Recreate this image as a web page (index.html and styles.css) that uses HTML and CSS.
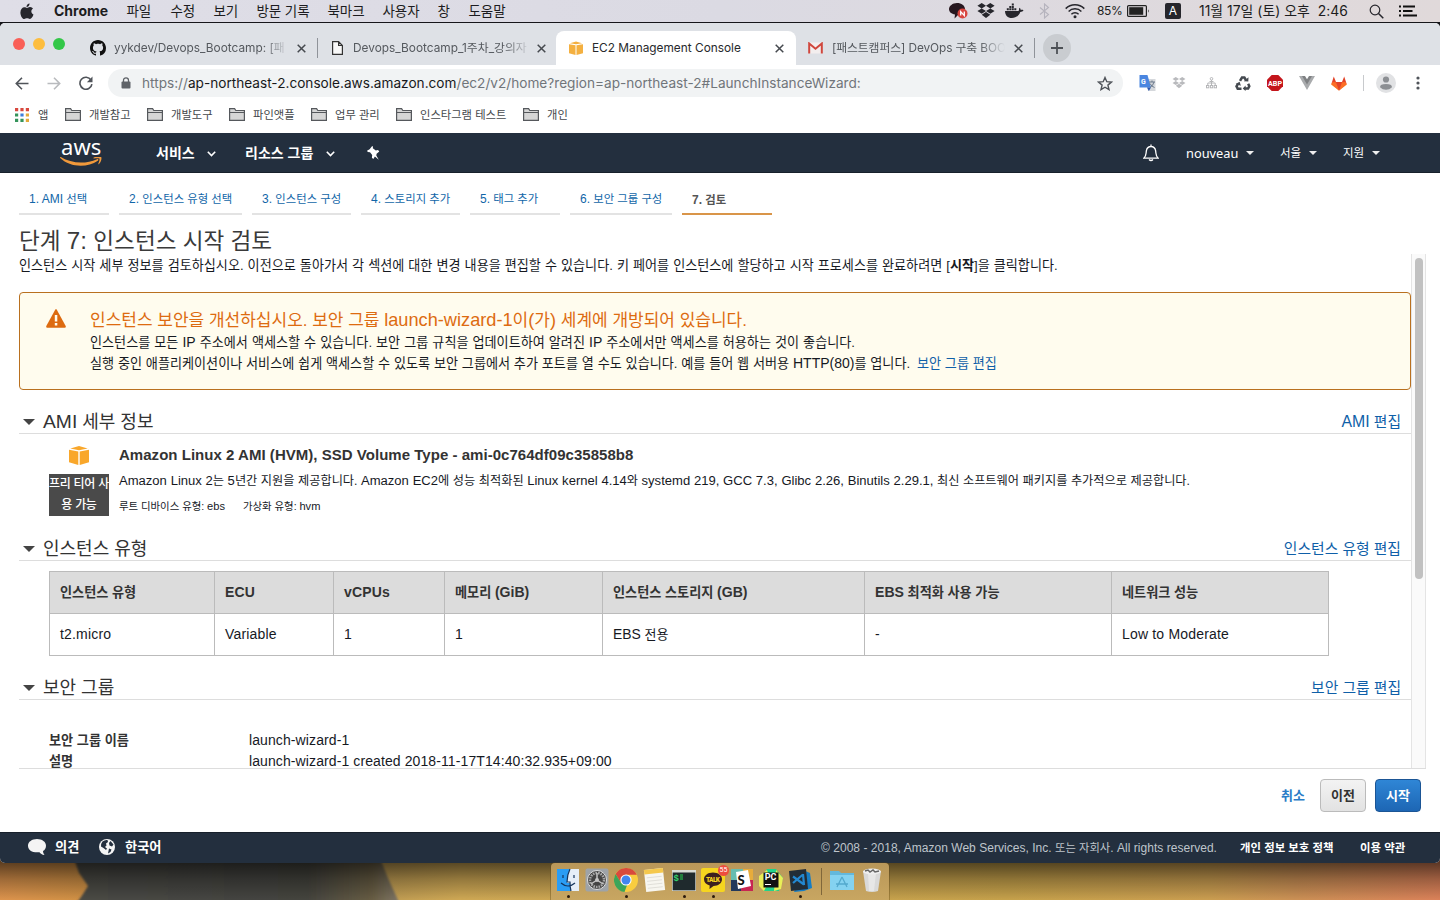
FILE: index.html
```html
<!DOCTYPE html>
<html lang="ko">
<head>
<meta charset="utf-8">
<title>EC2 Management Console</title>
<link rel="stylesheet" href="styles.css">
</head>
<body>
<div class="desktop">
  <header class="menubar">
    <svg class="apple" width="14" height="17" viewBox="0 0 14 17"><path fill="#26262c" d="M9.6 0.6c.1 1.9-1.500 3.500-3.100 3.400C6.300 2.300 8 .700 9.600.6zM7 4.900c.7 0 1.700-.9 3.100-.8 1.300.1 2.300.6 2.900 1.500-2.500 1.600-2 4.900.5 5.900-.8 2.300-2.100 4.500-3.600 4.500-1.100 0-1.500-.7-2.900-.7-1.300 0-1.700.7-2.700.7C2.200 16 .4 12.500.4 9.400c0-3.200 2-5.200 4-5.200 1.200 0 1.900.7 2.600.7z"/></svg>
    <nav class="menus">
      <b>Chrome</b><span>파일</span><span>수정</span><span>보기</span><span>방문 기록</span><span>북마크</span><span>사용자</span><span>창</span><span>도움말</span>
    </nav>
    <div class="status">
      <svg width="20" height="18" viewBox="0 0 20 18"><path fill="#26171f" d="M8 1c4.400 0 8 2.600 8 6s-3.600 6-7 6l-3.500 3.500.5-4C2.500 12 0 10 0 7s3.600-6 8-6z"/><circle cx="13.500" cy="11.500" r="5" fill="#d8453f"/><path d="M11.700 13.600v-4l3.600 4v-4" fill="none" stroke="#fff" stroke-width="1.300"/></svg>
      <svg width="18" height="16" viewBox="0 0 18 16"><path fill="#26262c" d="M4.700 0L9 2.700 4.700 5.400.4 2.700zM13.300 0l4.300 2.700-4.300 2.700L9 2.700zM.4 8.100l4.300-2.700L9 8.100l-4.300 2.700zM17.600 8.100l-4.300-2.700L9 8.100l4.300 2.700zM4.700 11.800L9 9.100l4.300 2.700L9 14.900z"/></svg>
      <svg width="19" height="16" viewBox="0 0 19 16"><path fill="#26262c" d="M0 8h13.500c.8-1 .4-2.300.9-3.300 1 .6 1.300 1.400 1.300 2.200 1-.3 2-.2 2.800.3-.5 1.200-1.700 1.700-3.200 1.700C13.900 12.800 10.800 15 6.800 15 2.700 15 .2 12.800 0 8zM1.800 5.300h2v2h-2zM4.300 5.300h2v2h-2zM6.800 5.300h2v2h-2zM9.300 5.300h2v2h-2zM4.300 2.900h2v2h-2zM6.800 2.900h2v2h-2zM6.800.5h2v2h-2z"/></svg>
      <svg width="11" height="16" viewBox="0 0 11 16"><path fill="none" stroke="#b5b3bd" stroke-width="1.100" d="M1 4.500l8.500 7L5.500 15V1l4 3.500L1 11.500"/></svg>
      <svg width="20" height="16" viewBox="0 0 20 16"><g fill="none" stroke="#26262c" stroke-width="1.500"><path d="M.7 5.600a13.200 13.200 0 0 1 18.600 0M3.600 8.500a9 9 0 0 1 12.800 0M6.400 11.300a5.100 5.100 0 0 1 7.200 0"/></g><circle cx="10" cy="13.800" r="1.500" fill="#26262c"/></svg>
      <span class="battery-text">85%</span>
      <svg width="23" height="12" viewBox="0 0 23 12"><rect x=".6" y=".6" width="18.800" height="10.800" rx="1" fill="none" stroke="#222" stroke-width="1.200"/><rect x="2.200" y="2.200" width="14" height="7.600" fill="#222"/><path d="M21 4.200q1.600 1.800 0 3.600z" fill="#222"/></svg>
      <span class="input-source">A</span>
      <span class="clock">11월 17일 (토) 오후&nbsp; 2:46</span>
      <svg width="15" height="15" viewBox="0 0 15 15"><circle cx="6" cy="6" r="4.800" fill="none" stroke="#26262c" stroke-width="1.200"/><path d="M9.500 9.500l4.800 4.800" stroke="#26262c" stroke-width="1.500"/></svg>
      <svg width="18" height="12" viewBox="0 0 18 12"><path d="M0 1.500h2M4 1.500h12M0 6h2M4 6h9.500M0 10.500h2M4 10.500h14" stroke="#111" stroke-width="1.800"/></svg>
    </div>
  </header>

  <main class="window">
    <div class="tabstrip">
      <div class="lights"><i class="red"></i><i class="yellow"></i><i class="green"></i></div>
      <div class="tab tab-1">
        <svg width="16" height="16" viewBox="0 0 16 16"><path fill="#111" fill-rule="evenodd" d="M8 0C3.580 0 0 3.580 0 8c0 3.540 2.290 6.530 5.470 7.590.4.070.55-.17.55-.38 0-.19-.01-.82-.01-1.490-2.010.37-2.530-.49-2.690-.94-.09-.23-.48-.94-.82-1.130-.28-.15-.68-.52-.01-.53.63-.01 1.080.58 1.230.82.72 1.210 1.870.87 2.330.66.070-.52.280-.87.510-1.070-1.780-.2-3.640-.89-3.640-3.950 0-.87.310-1.590.820-2.150-.08-.2-.36-1.020.080-2.120 0 0 .67-.21 2.200.82.64-.18 1.320-.27 2-.27s1.360.09 2 .27c1.530-1.040 2.200-.82 2.200-.82.440 1.100.160 1.920.080 2.120.510.560.820 1.270.820 2.150 0 3.070-1.870 3.750-3.650 3.950.290.250.540.730.540 1.480 0 1.070-.01 1.930-.01 2.200 0 .21.150.46.550.38A8.010 8.010 0 0 0 16 8c0-4.420-3.580-8-8-8z"/></svg>
        <span class="tab-title fade">yykdev/Devops_Bootcamp: [패</span>
        <svg class="x" width="9" height="9" viewBox="0 0 9 9"><path d="M.7.7l7.600 7.600M8.300.7L.7 8.300"/></svg>
      </div>
      <div class="tab tab-2">
        <svg width="11" height="14" viewBox="0 0 11 14"><path fill="#f8f8f8" stroke="#333" stroke-width="1.200" d="M.6.6h6l3.800 3.900v8.900H.6zM6.600.6v3.900h3.800"/></svg>
        <span class="tab-title fade">Devops_Bootcamp_1주차_강의자</span>
        <svg class="x" width="9" height="9" viewBox="0 0 9 9"><path d="M.7.7l7.600 7.600M8.300.7L.7 8.300"/></svg>
      </div>
      <div class="tab tab-3">
        <svg width="14" height="14" viewBox="0 0 20 20"><path fill="#f4b040" d="M0 4.500l9.300 1.600V20L0 17.600zM20 4.500l-9.300 1.600V20l9.300-2.400zM1.300 3.200L10 .8l8.700 2.400L10 4.700z"/></svg>
        <span class="tab-title">EC2 Management Console</span>
        <svg class="x" width="9" height="9" viewBox="0 0 9 9"><path d="M.7.7l7.600 7.600M8.300.7L.7 8.300"/></svg>
      </div>
      <div class="tab tab-4">
        <svg width="15" height="12" viewBox="0 0 15 12"><path fill="#f3eeee" d="M1 .5h13v11H1z"/><path fill="none" stroke="#d0473d" stroke-width="2" d="M1.200 11.500V1.500l6.300 5.300 6.300-5.300v10"/></svg>
        <span class="tab-title fade">[패스트캠퍼스] DevOps 구축 BOO</span>
        <svg class="x" width="9" height="9" viewBox="0 0 9 9"><path d="M.7.7l7.600 7.600M8.300.7L.7 8.300"/></svg>
      </div>
      <div class="newtab"><svg width="12" height="12" viewBox="0 0 12 12"><path d="M6 0v12M0 6h12" stroke="#4d5156" stroke-width="1.800"/></svg></div>
    </div>

    <div class="toolbar">
      <svg width="14" height="13" viewBox="0 0 14 13"><path d="M13.500 6.500H1.500M7 .8L1.300 6.500 7 12.200" fill="none" stroke="#50545a" stroke-width="1.600"/></svg>
      <svg width="14" height="13" viewBox="0 0 14 13"><path d="M.5 6.500h12M7 .8l5.700 5.700L7 12.200" fill="none" stroke="#b9bbbe" stroke-width="1.600"/></svg>
      <svg width="14" height="14" viewBox="0 0 14 14"><path d="M12 4A6 6 0 1 0 12.900 8.200" fill="none" stroke="#50545a" stroke-width="1.600"/><path d="M13.500.5v5.700H7.900z" fill="#50545a"/></svg>
      <div class="omnibox">
        <svg width="10" height="12" viewBox="0 0 10 12"><path d="M2.500 5V3.300a2.500 2.500 0 0 1 5 0V5" fill="none" stroke="#5f6368" stroke-width="1.300"/><rect x=".5" y="4.500" width="9" height="7" rx="1" fill="#5f6368"/></svg>
        <span class="url">https://<em>ap-northeast-2.console.aws.amazon.com</em>/ec2/v2/home?region=ap-northeast-2#LaunchInstanceWizard:</span>
        <svg width="16" height="15" viewBox="0 0 16 15"><path d="M8 1.500l1.800 4.200 4.600.4-3.500 3 1.100 4.500L8 11.200l-4 2.400 1.100-4.500-3.500-3 4.600-.4z" fill="none" stroke="#50545a" stroke-width="1.400"/></svg>
      </div>
      <div class="extensions">
        <svg width="17" height="16" viewBox="0 0 17 16"><path fill="#d5d8dc" d="M7 4h9.500v12H9z"/><path fill="#4a86e0" d="M.5 0h8l3.500 12.500H.5z"/><path fill="#2b59b5" d="M8 12.500h4L9.800 16z"/><text x="2" y="9" class="tiny-g">G</text><path d="M10 7h6M13 5.500V7M15 7q-1 4-4 5.500M11 8.500q1.500 3 4.500 4" stroke="#6d7b8d" fill="none"/></svg>
        <svg width="14" height="12" viewBox="0 0 18 16"><path fill="#b9babd" d="M4.700 0L9 2.700 4.700 5.400.4 2.700zM13.300 0l4.300 2.700-4.300 2.700L9 2.700zM.4 8.100l4.300-2.700L9 8.100l-4.300 2.700zM17.600 8.100l-4.300-2.700L9 8.100l4.300 2.700zM4.700 11.800L9 9.100l4.300 2.700L9 14.900z"/></svg>
        <svg width="11" height="12" viewBox="0 0 11 12"><g fill="none" stroke="#b5b6b8"><circle cx="5.500" cy="1.800" r="1.300"/><path d="M5.500 3v5M1.800 8V6h7.400v2M3.500 4.500h4"/><rect x=".5" y="8.500" width="2.300" height="2.300"/><rect x="4.400" y="8.500" width="2.300" height="2.300"/><rect x="8.200" y="8.500" width="2.300" height="2.300"/></g></svg>
        <svg width="16" height="15" viewBox="0 0 16 15"><g fill="none" stroke="#454a50" stroke-width="2.500"><path d="M5 4.800L7 1.500h2.400l1.500 2.500M13.200 7.800l1.100 2.500-1.200 2.300H10M6.500 12.700H2.700l-1.200-2.300 1.500-2.600"/></g><path fill="#454a50" d="M8.800 5.200l4.500.3L13.500 1.200zM10.600 9.500v5.400L7.700 12.500zM.6 8l4-2.200 1.300 4z"/></svg>
        <svg width="16" height="16" viewBox="0 0 16 16"><path fill="#c4161c" d="M4.700 0h6.600L16 4.700v6.600L11.300 16H4.700L0 11.300V4.700z"/><text x="1" y="10.900" class="tiny-abp" textLength="14" lengthAdjust="spacingAndGlyphs">ABP</text></svg>
        <svg width="16" height="14" viewBox="0 0 16 14"><path fill="#a9abad" d="M0 0h5l3 4.500L11 0h5L8 14z"/><path fill="#7f8183" d="M3 0h3l2 3.300L10 0h3L8 8.500z"/></svg>
        <svg width="16" height="15" viewBox="0 0 16 15"><path fill="#fc8a2b" d="M0 8.500L2 6h12l2 2.500-8 6z"/><path fill="#e24329" d="M2.800.5L5 6h6L13.200.5l2.300 7L8 14.500.5 7.500z"/><path fill="#fc6d26" d="M5 6.200L8 14.500.6 7.800 1.500 6zM11 6.200l-3 8.300 7.400-6.700-.9-1.800z"/></svg>
      </div>
      <i class="sep"></i>
      <svg class="avatar" width="20" height="20" viewBox="0 0 20 20"><circle cx="10" cy="10" r="10" fill="#e1e2e4"/><circle cx="10" cy="6.500" r="3.100" fill="#8c8f93"/><path d="M4 14.200q0-3.200 6-3.200t6 3.200q-2.500 2.600-6 2.600t-6-2.600z" fill="#8c8f93"/></svg>
      <svg width="4" height="14" viewBox="0 0 4 14"><g fill="#50545a"><circle cx="2" cy="2" r="1.600"/><circle cx="2" cy="7" r="1.600"/><circle cx="2" cy="12" r="1.600"/></g></svg>
    </div>

    <div class="bookmarks">
      <svg width="14" height="14" viewBox="0 0 14 14"><path fill="#d8483e" d="M0 0h3.200v3.200H0zM5.400 0h3.200v3.200H5.400zM10.800 0H14v3.200h-3.200z"/><path fill="#35945b" d="M0 5.400h3.200v3.200H0zM0 10.800h3.200V14H0z"/><path fill="#3f7fdb" d="M5.400 5.400h3.200v3.200H5.400z"/><path fill="#35945b" d="M5.400 10.800h3.200V14H5.400z"/><path fill="#e3a93b" d="M10.800 5.400H14v3.200h-3.200zM10.800 10.800H14V14h-3.200z"/></svg>
      <span>앱</span>
      <svg class="folder" viewBox="0 0 16 13"><path d="M.6 12.400V.6h5l1.200 1.900h8.600v9.900z"/><path d="M.6 4.500h14.800"/></svg><span>개발참고</span>
      <svg class="folder" viewBox="0 0 16 13"><path d="M.6 12.400V.6h5l1.200 1.900h8.600v9.900z"/><path d="M.6 4.500h14.800"/></svg><span>개발도구</span>
      <svg class="folder" viewBox="0 0 16 13"><path d="M.6 12.400V.6h5l1.200 1.900h8.600v9.900z"/><path d="M.6 4.500h14.800"/></svg><span>파인앳플</span>
      <svg class="folder" viewBox="0 0 16 13"><path d="M.6 12.400V.6h5l1.200 1.900h8.600v9.900z"/><path d="M.6 4.500h14.800"/></svg><span>업무 관리</span>
      <svg class="folder" viewBox="0 0 16 13"><path d="M.6 12.400V.6h5l1.200 1.900h8.600v9.900z"/><path d="M.6 4.500h14.800"/></svg><span>인스타그램 테스트</span>
      <svg class="folder" viewBox="0 0 16 13"><path d="M.6 12.400V.6h5l1.200 1.900h8.600v9.900z"/><path d="M.6 4.500h14.800"/></svg><span>개인</span>
    </div>

    <div class="awsnav">
      <div class="logo"><span>aws</span><svg width="42" height="10" viewBox="0 0 42 10"><path fill="#f0993b" d="M.8 0C11 6.300 25 7.500 37 2.200c1.200-.5 2 .6.800 1.500C27 11.300 10 10.500.2 1.100-.2.500.200-.2.800 0z"/><path fill="#f0993b" d="M33.500.8C35.500-.5 40.500-.8 41.300.2c.6 1-.3 5-2.300 6.800-.5.400-.8.200-.6-.4.500-1.300 1.600-4.200 1-5-.5-.7-3.700-.4-5.400-.2-.6.100-.900-.3-.5-.6z"/></svg></div>
      <b class="svc">서비스</b><svg class="chev" viewBox="0 0 9 6"><path d="M.8.8l3.700 3.700L8.200.8"/></svg>
      <b class="res">리소스 그룹</b><svg class="chev" viewBox="0 0 9 6"><path d="M.8.8l3.700 3.700L8.200.8"/></svg>
      <svg width="13" height="14" viewBox="0 0 13 14"><path fill="#fff" d="M5.200 0L6 .8l-.2 1.500 3 2.300 2.200-.5 1.300 1.500-2.700 2.200-.3 1.700 2.500 4.200-3.900-3.200-1.600 2.400-1.400-1.200.3-2.600L3 6.300l-2.200-.2L0 4.700 2.600 3.200z"/></svg>
      <div class="account">
        <svg width="16" height="18" viewBox="0 0 16 18"><path d="M.8 14.200c2.700-2.200 2-4.300 2.600-7.600C3.900 4 5.700 2.500 8 2.500s4.100 1.500 4.600 4.100c.6 3.300-.1 5.400 2.600 7.600zM8 .5v2M6 15.500q2 2 4 0" fill="none" stroke="#fff" stroke-width="1.300"/></svg>
        <span class="user">nouveau</span><i class="caret"></i>
        <span class="region">서울</span><i class="caret"></i>
        <span class="support">지원</span><i class="caret"></i>
      </div>
    </div>

    <div class="page">
      <nav class="steps">
        <a>1. AMI <s>선택</s></a><a>2. <s>인스턴스 유형 선택</s></a><a>3. <s>인스턴스 구성</s></a><a>4. <s>스토리지 추가</s></a><a>5. <s>태그 추가</s></a><a>6. <s>보안 그룹 구성</s></a><a class="current">7. <s>검토</s></a>
      </nav>
      <h1>단계 <span class="en">7:</span> 인스턴스 시작 검토</h1>
      <div class="scroller">
        <div class="content">
          <p class="intro">인스턴스 시작 세부 정보를 검토하십시오. 이전으로 돌아가서 각 섹션에 대한 변경 내용을 편집할 수 있습니다. 키 페어를 인스턴스에 할당하고 시작 프로세스를 완료하려면 [<b>시작</b>]을 클릭합니다.</p>
          <div class="alert">
            <svg width="20" height="19" viewBox="0 0 20 19"><path fill="#dd6b10" d="M9.200.7q.8-1.200 1.600 0l8.900 16.400q.5 1.600-1 1.600H1.300q-1.500 0-1-1.600z"/><path fill="#fffcee" d="M8.800 6h2.500v6.500H8.800zM8.800 14h2.500v2.400H8.800z"/></svg>
            <div>
              <h2>인스턴스 보안을 개선하십시오. 보안 그룹 <span class="en">launch-wizard-1</span>이<span class="en">(</span>가<span class="en">)</span> 세계에 개방되어 있습니다.</h2>
              <p>인스턴스를 모든 <span class="en">IP</span> 주소에서 액세스할 수 있습니다. 보안 그룹 규칙을 업데이트하여 알려진 <span class="en">IP</span> 주소에서만 액세스를 허용하는 것이 좋습니다.</p>
              <p class="a2">실행 중인 애플리케이션이나 서비스에 쉽게 액세스할 수 있도록 보안 그룹에서 추가 포트를 열 수도 있습니다. 예를 들어 웹 서버용 <span class="en">HTTP(80)</span>를 엽니다. <a>보안 그룹 편집</a></p>
            </div>
          </div>

          <div class="section s1"><i class="tri"></i><h3><span class="en">AMI</span> 세부 정보</h3><a><span class="en">AMI</span> 편집</a></div>
          <div class="ami">
            <div class="ami-side">
              <svg width="20" height="19" viewBox="0 0 20 19"><path fill="#f9a72b" d="M0 3.800l9.300 1.700V19L0 16.300zM20 3.800l-9.300 1.700V19l9.300-2.700zM1.300 2.500L10 0l8.700 2.500L10 4.200z"/></svg>
              <div class="tier">프리 티어 사<br>용 가능</div>
            </div>
            <div class="ami-text">
              <h4>Amazon Linux 2 AMI (HVM), SSD Volume Type - ami-0c764df09c35858b8</h4>
              <p class="desc"><span class="en">Amazon Linux 2</span>는 <span class="en">5</span>년간 지원을 제공합니다. <span class="en">Amazon EC2</span>에 성능 최적화된 <span class="en">Linux kernel 4.14</span>와 <span class="en">systemd 219, GCC 7.3, Glibc 2.26, Binutils 2.29.1,</span> 최신 소프트웨어 패키지를 추가적으로 제공합니다.</p>
              <p class="meta"><span>루트 디바이스 유형: <span class="en">ebs</span></span><span>가상화 유형: <span class="en">hvm</span></span></p>
            </div>
          </div>

          <div class="section s2"><i class="tri"></i><h3>인스턴스 유형</h3><a>인스턴스 유형 편집</a></div>
          <div class="grid head"><span>인스턴스 유형</span><span class="lat">ECU</span><span class="lat">vCPUs</span><span>메모리 <span class="en">(GiB)</span></span><span>인스턴스 스토리지 <span class="en">(GB)</span></span><span><span class="en">EBS</span> 최적화 사용 가능</span><span>네트워크 성능</span></div>
          <div class="grid"><span class="lat">t2.micro</span><span class="lat">Variable</span><span class="lat">1</span><span class="lat">1</span><span><span class="en">EBS</span> 전용</span><span class="lat">-</span><span class="lat">Low to Moderate</span></div>

          <div class="section s3"><i class="tri"></i><h3>보안 그룹</h3><a>보안 그룹 편집</a></div>
          <dl class="sg"><dt>보안 그룹 이름</dt><dd>launch-wizard-1</dd><dt>설명</dt><dd>launch-wizard-1 created 2018-11-17T14:40:32.935+09:00</dd></dl>
        </div>
        <div class="scrollbar"><i></i></div>
      </div>
      <div class="actions"><a>취소</a><button>이전</button><button class="primary">시작</button></div>
    </div>

    <footer class="foot">
      <svg width="18" height="16" viewBox="0 0 18 16"><path fill="#f4f4f4" d="M9 0c5 0 9 2.800 9 6.700 0 2.600-1.300 4.300-3 5.300 0 1.500.5 2.700 1.500 4-2.500-.4-4-1.500-5-2.800C5 14 0 11.500 0 6.700 0 2.800 4 0 9 0z"/></svg>
      <b class="fb">의견</b>
      <svg width="16" height="16" viewBox="0 0 16 16"><circle cx="8" cy="8" r="8" fill="#f4f4f4"/><path fill="#232f3e" d="M3.500 2.500Q6 .5 8.500 1L9 3 7 4.500l.5 2L6 8l2 1.500-1 1.500-2.500-2L2 7.500Q1.500 5 3.500 2.500zM11.500 2l3 3.500-1.500 2-2.500-1-.5-2.500zM10 9.500l2.500 1-1 2.500-2.500 1.500z"/></svg>
      <b class="lang">한국어</b>
      <span class="copy">© 2008 - 2018, Amazon Web Services, Inc. <s>또는 자회사</s>. All rights reserved.</span>
      <b class="priv">개인 정보 보호 정책</b><b class="terms">이용 약관</b>
    </footer>
  </main>

  <div class="wall">
    <svg class="wallpaper" width="1440" height="60" viewBox="0 0 1440 60">
      <defs>
        <linearGradient id="g" x1="0" x2="1" y1="0" y2="0"><stop offset="0" stop-color="#eb9d52"/><stop offset=".06" stop-color="#dd9a49"/><stop offset=".26" stop-color="#c9a458"/><stop offset=".32" stop-color="#dcb35a"/><stop offset=".7" stop-color="#d3ac50"/><stop offset=".84" stop-color="#d8a856"/><stop offset=".9" stop-color="#d99a5b"/><stop offset="1" stop-color="#e98a5f"/></linearGradient>
        <linearGradient id="d" x1="0" x2="1" y1="0" y2="0"><stop offset="0" stop-color="#50504a"/><stop offset=".7" stop-color="#484843"/><stop offset=".9" stop-color="#6d6247"/><stop offset="1" stop-color="#8b8172"/></linearGradient>
        <linearGradient id="s" x1="0" x2="0" y1="0" y2="1"><stop offset="0" stop-color="#000" stop-opacity=".68"/><stop offset=".35" stop-color="#000" stop-opacity=".33"/><stop offset=".7" stop-color="#000" stop-opacity=".06"/></linearGradient>
        <filter id="b"><feGaussianBlur stdDeviation="1.200"/></filter>
      </defs>
      <rect width="1440" height="60" fill="url(#g)"/>
      <path fill="url(#d)" filter="url(#b)" d="M72-5L79 15 88 28 83 36 76 46V60H404L398 42 388 20 378-5z"/>
      <rect width="1440" height="60" fill="url(#s)"/>
    </svg>
    <div class="dock">
      <div class="app on"><svg viewBox="0 0 24 24"><path fill="#2a9df4" d="M1 1h22v22H1z"/><path fill="#e5eef8" d="M14 1h9v22h-8q-1-4-1-8h-3q0-8 3-14z"/><path d="M7 7v3M18 7v3M5 15q7 6 14 0M14 1q-3 6-3 13h3q0 5 1 9" fill="none" stroke="#15345c" stroke-width="1.200"/></svg></div>
      <div class="app"><svg viewBox="0 0 24 24"><rect x=".5" y=".5" width="23" height="23" rx="2" fill="#9ea3a8"/><circle cx="12" cy="12" r="9.500" fill="#444" stroke="#ddd" stroke-width="1"/><circle cx="12" cy="12" r="7" fill="none" stroke="#a9a9a9" stroke-width="2.500" stroke-dasharray="1.600 1"/><circle cx="12" cy="12" r="2" fill="#c5c5c5"/><path d="M12 12V5M12 12l6 4M12 12l-6 4" stroke="#c5c5c5" stroke-width="1.500"/></svg></div>
      <div class="app on"><svg viewBox="0 0 24 24"><circle cx="12" cy="12" r="12" fill="#f9cd3f"/><path fill="#d94a3d" d="M1.600 6A12 12 0 0 1 22.800 6.800H12L7 15z"/><path fill="#3ba55a" d="M1.600 6l5.500 9 6 2-2.600 7A12 12 0 0 1 1.600 6z"/><circle cx="12" cy="12" r="5.600" fill="#fff"/><circle cx="12" cy="12" r="4.500" fill="#4285f0"/></svg></div>
      <div class="app"><svg viewBox="0 0 24 24"><g transform="rotate(-6 12 12)"><path fill="#f7f6f0" d="M2 1h19v22H2z"/><path fill="#f5c84c" d="M2 1h19v4.500H2z"/><path d="M4 9h15M4 12.500h15M4 16h15M4 19.500h15" stroke="#d2d0ca" stroke-width=".6"/></g></svg></div>
      <div class="app on"><svg viewBox="0 0 24 24"><path fill="#d9dcd5" d="M0 2h24v21H0z"/><path fill="#1f2a2d" d="M.7 4.500h22.600v17.800H.7z"/><text x="1.500" y="12.500" class="term">$</text><path fill="#227d3c" d="M8 6h3v6H8z"/></svg></div>
      <div class="app on"><svg viewBox="0 0 24 24"><rect width="24" height="24" y="0" rx="2" fill="#f6d51f"/><path fill="#3b2020" d="M12 4.500c5 0 9 2.800 9 6.800s-4 6.700-8.500 6.700L8.500 21l.2-3.600C5.300 16.500 3 14.500 3 11.300c0-4 4-6.800 9-6.800z"/><text x="5" y="13.500" class="talk" textLength="14">TALK</text></svg><span class="badge">55</span></div>
      <div class="app"><svg viewBox="0 0 24 24"><path fill="#67bdb0" d="M1 1h12v11H1z"/><path fill="#e8ac3b" d="M13 1h10v11H13z"/><path fill="#23395b" d="M1 12h12v11H1z"/><path fill="#c72652" d="M11 12h12v11H11z"/><path fill="#fff" d="M6 4l12-2 3 16-13 3z"/><text x="7.500" y="17" class="slack">S</text></svg></div>
      <div class="app"><svg viewBox="0 0 24 24"><path fill="#22d28b" d="M1 10L8 1l9 0 7 9-4 13H5z"/><path fill="#e9ef57" d="M0 8l8-6 3 9-6 12-5-5zM17 2l7 8-2 11-7 2z"/><path fill="#111" d="M4.500 4.500h15v15h-15z"/><text x="5.800" y="12.300" class="pc">PC</text><path stroke="#fff" d="M6 16.500h6"/></svg></div>
      <div class="app on"><svg viewBox="0 0 24 24"><path fill="#167dc4" d="M15 2l7 3 2 15-8 3-10 1z"/><path fill="#222d37" d="M1 3l17-2 2 20-17 2z"/><path d="M15 6l1 11M15 6.500l-10 8.500M16 16.500L5 8.500" stroke="#2388d1" stroke-width="2.200"/></svg></div>
      <i class="dock-sep"></i>
      <div class="app wide"><svg viewBox="0 0 26 24"><path fill="#63b8dc" d="M1 3h9l2 2h13v17H1z"/><path fill="#84d2f0" d="M1 7h24v15H1z"/><path d="M13 9l-5 10M13 9l5 10M7 16h12" stroke="#53a9cd" fill="none" stroke-width="1.300"/></svg></div>
      <div class="app"><svg viewBox="0 0 24 24"><path fill="#d9d9d9" d="M3 3h18l-3 20q-6 2-12 0z"/><path fill="#ededed" d="M8 5l1 18h5l2-18z" opacity=".7"/><ellipse cx="12" cy="3.500" rx="9" ry="3" fill="#eee"/><path d="M5 3l3-1 2 2 3-2 2 2 4-1" stroke="#666" stroke-width="1.500" fill="none"/></svg></div>
    </div>
  </div>
</div>
</body>
</html>
```
FILE: styles.css
```css
* { box-sizing: border-box; }
body { margin: 0; font-family: "Liberation Sans", "Noto Sans CJK KR", sans-serif; color: #16191f; }
h1, h2, h3, h4, p, dl, dd { margin: 0; font-weight: 400; }
s { text-decoration: none; }
svg { display: block; flex: none; }
.en { font-size: 1.07em; }

.desktop { width: 1440px; height: 900px; display: flex; flex-direction: column; overflow: hidden; background: #16161a; }

/* macOS menu bar */
.menubar { height: 22px; margin-bottom: 1px; flex: none; display: flex; align-items: center; padding: 0 23px 0 20px; background: linear-gradient(90deg, #dfdee7, #dbdae3 50%, #e0d9da); font: 13.500px/22px Inter, "Noto Sans CJK KR", sans-serif; color: #1c1c20; white-space: nowrap; }
.apple { margin-right: 20px; }
.menus { display: grid; grid-template-columns: 72px 44px 43px 43px 71px 55px 55px 31px 50px; }
.menus b { font-size: 14px; }
.menus span { letter-spacing: -.1px; padding-left: .5px; }
.status { margin-left: auto; display: flex; align-items: center; }
.status > svg:nth-child(1) { margin-right: 8px; }
.status > svg:nth-child(2) { margin-right: 10px; }
.status > svg:nth-child(3) { margin-right: 15px; }
.status > svg:nth-child(4) { margin-right: 15px; }
.status > svg:nth-child(5) { margin-right: 12px; }
.battery-text { width: 30px; font-size: 12px; letter-spacing: -.4px; }
.input-source { width: 16px; height: 16px; margin: 0 18px 0 15px; border-radius: 2px; background: #26262c; color: #fff; font: 12px/16px Inter, sans-serif; text-align: center; }
.clock { width: 147px; font-size: 13.900px; letter-spacing: .02px; }
.status .clock + svg { margin: 0 15px 0 23px; }

/* Browser window */
.window { height: 840px; flex: none; display: flex; flex-direction: column; background: #fff; border-radius: 5px; overflow: hidden; position: relative; z-index: 1; }
.tabstrip { height: 42px; flex: none; display: flex; align-items: flex-end; background: #dee1e6; padding-left: 13px; }
.lights { display: flex; gap: 8px; height: 42px; align-items: center; width: 77px; }
.lights i { width: 12px; height: 12px; border-radius: 50%; }
.red { background: #f95f57; }
.yellow { background: #fdbd3e; }
.green { background: #33c748; }
.tab { height: 34px; display: flex; align-items: center; font: 11.850px/16px Inter, "Noto Sans CJK KR", sans-serif; color: #55595e; }
.tab-title { flex: 1; overflow: hidden; white-space: nowrap; }
.fade { -webkit-mask-image: linear-gradient(90deg, #000 calc(100% - 26px), transparent); mask-image: linear-gradient(90deg, #000 calc(100% - 26px), transparent); }
.x { fill: none; stroke: #45494e; stroke-width: 1.500; }
.tab-1 { width: 228px; }
.tab-1 .tab-title { margin: 0 8px; }
.tab-1::after, .tab-4::after { content: ""; width: 1px; height: 20px; background: #8f9399; margin: 0 0 0 11px; }
.tab-2 { width: 238px; padding: 0 10px 0 14px; }
.tab-2 .tab-title { margin: 0 6px 0 10px; }
.tab-3 { width: 240px; padding: 0 12px 0 13px; background: #fff; border-radius: 8px 8px 0 0; color: #27292c; }
.tab-3 .tab-title { margin-left: 9px; }
.tab-4 { width: 239px; padding-left: 12px; }
.tab-4 .tab-title { margin: 0 9px 0 9px; letter-spacing: -.1px; }
.newtab { width: 28px; height: 28px; margin: 0 0 3px 8px; border-radius: 50%; background: #c9ccd0; display: grid; place-items: center; }

.toolbar { height: 36px; flex: none; display: flex; align-items: center; padding: 0 20px 0 15px; }
.toolbar > svg:nth-child(1), .toolbar > svg:nth-child(2) { margin-right: 18px; }
.omnibox { width: 1015px; height: 28px; margin-left: 15px; border-radius: 14px; background: #f1f3f4; display: flex; align-items: center; padding: 0 10px 0 13px; }
.url { flex: 1; margin-left: 11px; font: 13.640px/20px Inter, sans-serif; color: #70757a; white-space: nowrap; }
.url em { font-style: normal; color: #17181a; }
.extensions { display: grid; grid-template-columns: repeat(7, 32px); place-items: center; margin-left: 8px; }
.sep { width: 1px; height: 16px; background: #c8cacd; margin: 0 12px 0 8px; }
.avatar { margin-right: 20px; }
.toolbar > svg:last-child { margin-left: auto; }
.tiny-g { font: bold 7px Roboto, sans-serif; fill: #fff; }
.tiny-abp { font: bold 8px Roboto, sans-serif; fill: #fff; }

.bookmarks { height: 32px; flex: none; display: grid; grid-template-columns: 23px 27px 24px 58px 24px 58px 24px 58px 24px 61px 24px 103px 24px 40px; align-items: center; padding: 0 0 5px 15px; font: 11.300px/16px Inter, "Noto Sans CJK KR", sans-serif; color: #45484c; white-space: nowrap; }
.folder { width: 16px; height: 13px; fill: #d6d6d6; stroke: #55585c; stroke-width: 1.200; }

/* AWS navigation */
.awsnav { height: 40px; flex: none; display: flex; align-items: center; background: #232f3e; border-bottom: 1px solid #17202b; padding: 0 60px 0 60px; color: #fff; white-space: nowrap; }
.logo { width: 96px; font: 22px/17px "Noto Sans", sans-serif; height: 29px; }
.logo span { display: block; padding-left: 1px; margin-bottom: 2px; letter-spacing: .1px; }
.awsnav b { font: bold 14px/20px "Noto Sans CJK KR", sans-serif; padding-bottom: 1px; }
.svc { width: 51px; }
.res { width: 81px; }
.chev { width: 9px; height: 6px; fill: none; stroke: #fff; stroke-width: 1.600; margin: 2px 29px 0 0; }
.res + .chev { margin-right: 32px; }
.account { margin-left: auto; display: flex; align-items: center; font: 12.800px/20px "Noto Sans", "Noto Sans CJK KR", sans-serif; }
.user { width: 60px; margin-left: 27px; }
.region, .support { width: 29px; margin-left: 26px; font-size: 11.500px; }
.caret { border: 4px solid transparent; border-top-color: #eee; border-bottom: 0; }

/* Wizard */
.page { flex: 1; min-height: 0; padding-left: 19px; display: flex; flex-direction: column; }
.steps { height: 42px; flex: none; display: grid; grid-template-columns: 90px 123px 99px 99px 90px 102px 90px; column-gap: 10px; font-size: 12px; color: #1166a8; white-space: nowrap; }
.steps a { border-bottom: 2px solid #e3e3e3; padding: 16px 0 0 10px; line-height: 20px; }
.steps s { font-size: 11.350px; }
.steps .current { border-color: #d99549; color: #555; font-weight: bold; padding-top: 17px; }
h1 { height: 39px; flex: none; padding-top: 11px; font: 400 22.600px/30px "Liberation Sans", "Noto Sans CJK KR", sans-serif; color: #3a3a3a; }
.scroller { height: 515px; flex: none; width: 1407px; display: flex; border-bottom: 1px solid #ddd; overflow: hidden; }
.content { width: 1392px; font-size: 13px; }
.scrollbar { width: 15px; border: solid #e4e4e4; border-width: 0 1px; background: #fafafa; padding: 4px 2px 0 3px; }
.scrollbar i { display: block; width: 8px; height: 321px; border-radius: 4px; background: #c1c1c1; }
.intro { height: 38px; font-size: 13.100px; line-height: 23px; word-spacing: .4px; white-space: nowrap; }
.alert { height: 98px; border: 1px solid #b9701f; border-radius: 4px; background: #fffcee; display: flex; padding: 16px 0 0 26px; white-space: nowrap; }
.alert > div { margin-left: 24px; }
.alert h2 { font-size: 17px; line-height: 22px; color: #dd6b10; }
.alert p { font-size: 13.100px; line-height: 21px; word-spacing: .4px; }
.alert .a2 { word-spacing: .2px; }
.a2 a { margin-left: 3px; }
.section { display: flex; align-items: center; height: 26px; border-bottom: 1px solid #ddd; padding: 0 10px 0 4px; font-size: 14.800px; }
.section h3 { flex: 1; margin-left: 8px; padding-top: 2px; font-size: 18px; line-height: 24px; color: #333; }
.section a, .alert a { color: #0f5fa8; }
.s1 { margin-top: 18px; }
.s2 { margin-top: 18px; }
.s3 { margin-top: 18px; }
.tri { border: 6px solid transparent; border-top-color: #444; border-bottom: 0; margin-top: 2px; }
.ami { height: 83px; display: flex; padding: 12px 0 0 30px; }
.ami-side { width: 60px; margin-right: 10px; display: flex; flex-direction: column; align-items: center; gap: 9px; }
.tier { width: 60px; height: 42px; background: #4a4a4a; color: #fff; font-size: 12px; font-weight: 500; line-height: 21px; text-align: center; letter-spacing: -.3px; white-space: nowrap; }
.ami-text { white-space: nowrap; }
.ami-text h4 { font-weight: bold; font-size: 15px; letter-spacing: .03px; line-height: 18px; color: #333; }
.desc { font-size: 12.200px; line-height: 20px; margin-top: 7px; word-spacing: .15px; }
.meta { display: flex; gap: 18px; font-size: 10.400px; line-height: 16px; margin-top: 7px; }
.grid { margin-left: 30px; width: 1280px; height: 42px; display: grid; grid-template-columns: 165px 119px 111px 158px 262px 247px 218px; border: 1px solid #bbb; border-top: 0; }
.grid > span { padding-left: 10px; line-height: 41px; border-right: 1px solid #bbb; }
.grid > span:last-child { border-right: 0; }
.grid .lat { font-size: 14px; letter-spacing: .18px; }
.sg dd { font-size: 14px; letter-spacing: .1px; }
.head { margin-top: 10px; height: 43px; border-top: 1px solid #bbb; background: #dcdcdc; font-weight: bold; color: #333; font-size: 13.150px; }
.sg { margin: 30px 0 0 30px; display: grid; grid-template-columns: 200px 1fr; line-height: 21px; }
.sg dt { font-weight: bold; color: #333; font-size: 13.150px; }
.actions { display: flex; justify-content: flex-end; align-items: center; gap: 9px; padding: 10px 19px 0 0; font: bold 13px/20px "Noto Sans CJK KR", sans-serif; color: #2a7cc7; }
.actions a { margin-right: 6px; padding-bottom: 1px; }
button { width: 46px; height: 33px; padding: 0 0 2px; border: 1px solid #bbb; border-radius: 4px; background: linear-gradient(#f3f3f3, #e2e2e2); font: bold 13px/20px "Noto Sans CJK KR", sans-serif; color: #333; }
.primary { border-color: #1b5595; background: linear-gradient(#2f86d6, #1d66b4); color: #fff; }

.foot { height: 31px; flex: none; display: flex; align-items: center; background: #232f3e; border-top: 1px solid #17202b; padding: 0 0 2px 28px; color: #fff; white-space: nowrap; }
.foot b { font: bold 13.200px/20px "Noto Sans CJK KR", sans-serif; padding-bottom: 1px; }
.foot .fb { width: 44px; margin-left: 9px; }
.foot .lang { margin-left: 10px; width: 60px; }
.copy { margin-left: auto; width: 419px; font-size: 12px; letter-spacing: .03px; color: #bfc5cb; }
.copy s { font-size: 11.300px; }
.foot .priv { width: 120px; font-size: 11.400px; }
.foot .terms { width: 80px; font-size: 11.400px; }

/* Desktop and dock */
.wall { height: 37px; position: relative; display: flex; padding-left: 551px; }
.wallpaper { position: absolute; left: 0; top: -5px; }
.dock { position: relative; width: 338px; height: 37px; background: linear-gradient(#b99759, #c8a661); border-radius: 4px 4px 0 0; display: flex; padding: 5px 5px 0; gap: 5px; z-index: 2; box-shadow: 0 0 0 1px rgba(90, 65, 25, .35); }
.app { width: 24px; height: 24px; position: relative; }
.app svg { width: 24px; height: 24px; }
.app.wide, .app.wide svg { width: 26px; }
.app.on::after { content: ""; position: absolute; left: 11px; top: 27px; width: 3px; height: 3px; border-radius: 50%; background: #2b1a0c; }
.dock-sep { width: 1px; height: 27px; background: #80673a; margin: 0 2px 0 4px; }
.badge { position: absolute; right: -4px; top: -3px; width: 11px; height: 11px; border-radius: 50%; background: #ee4c3e; color: #fff; font: 7px/11px Roboto, sans-serif; text-align: center; }
.term { font: bold 9px "Liberation Mono", monospace; fill: #35d06b; }
.talk { font: 900 6.500px Roboto, sans-serif; fill: #f6d51f; }
.slack { font: 900 13px Lato, sans-serif; fill: #111; }
.pc { font: bold 9px Roboto, sans-serif; fill: #fff; }
```
